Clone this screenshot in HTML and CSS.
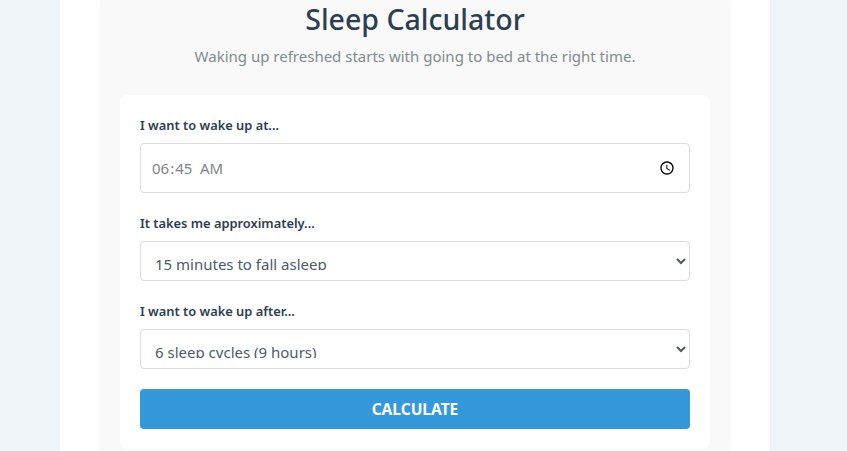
FILE: index.html
```html
<!DOCTYPE html>
<html lang="en">
<head>
    <meta charset="UTF-8">
    <meta name="viewport" content="width=device-width, initial-scale=1.0">
    <title>Sleep Calculator</title>
    <link rel="stylesheet" href="styles.css">
</head>
<body>
    <div class="page">
        <main class="panel">
            <h1>Sleep Calculator</h1>
            <p class="intro">Waking up refreshed starts with going to bed at the right time.</p>
            <form class="calc-form">
                <div class="form-group">
                    <label for="wakeTime">I want to wake up at...</label>
                    <input type="time" id="wakeTime" value="06:45">
                </div>
                <div class="form-group">
                    <label for="fallAsleep">It takes me approximately...</label>
                    <select id="fallAsleep">
                        <option>15 minutes to fall asleep</option>
                        <option>30 minutes to fall asleep</option>
                    </select>
                </div>
                <div class="form-group">
                    <label for="cycles">I want to wake up after...</label>
                    <select id="cycles">
                        <option>6 sleep cycles (9 hours)</option>
                        <option>5 sleep cycles (7.5 hours)</option>
                    </select>
                </div>
                <button type="button">CALCULATE</button>
            </form>
        </main>
    </div>
</body>
</html>
```

FILE: styles.css
```css
* {
    margin: 0;
    padding: 0;
    box-sizing: border-box;
    font-family: 'Noto Sans', 'Open Sans', sans-serif;
}

html, body {
    height: 100%;
    overflow: hidden;
}

body {
    background-color: #eff4f8;
    color: #2c3e50;
}

.page {
    width: 710px;
    height: 100%;
    margin-left: 60px;
    padding: 0 40px;
    background: white;
}

.panel {
    height: 100%;
    padding: 0 20px;
    background: #f9f9f9;
    box-shadow: 0 0 8px rgba(0, 0, 0, 0.04);
}

.panel h1 {
    font-size: 28.5px;
    font-weight: 500;
    line-height: 38px;
    text-align: center;
    color: #2c3e50;
}

.intro {
    margin-top: 7px;
    margin-bottom: 28px;
    font-size: 15px;
    line-height: 22px;
    text-align: center;
    color: #7f8c8d;
}

.calc-form {
    padding: 20px;
    background: white;
    border-radius: 8px;
}

.form-group {
    margin-bottom: 20px;
}

.form-group label {
    display: block;
    margin-bottom: 8px;
    font-size: 12.85px;
    font-weight: 600;
    line-height: 20px;
}

.form-group input,
.form-group select {
    display: block;
    width: 100%;
    border: 1px solid #ddd;
    border-radius: 4px;
    background-color: white;
}

.form-group input {
    height: 50px;
    padding: 12px 15px 12px 10px;
    font-size: 15px;
    color: #808488;
}

.form-group input::-webkit-datetime-edit-ampm-field {
    margin-left: 3px;
}

.form-group input::-webkit-calendar-picker-indicator {
    margin-right: -4px;
}

.form-group select {
    height: 40px;
    padding: 11px 10px 10px;
    font-size: 15px;
    color: #4a5a6d;
}

button {
    display: block;
    width: 100%;
    height: 40px;
    border: none;
    border-radius: 4px;
    background-color: #3498db;
    color: white;
    font-size: 15.5px;
    font-weight: 700;
    cursor: pointer;
}
```
